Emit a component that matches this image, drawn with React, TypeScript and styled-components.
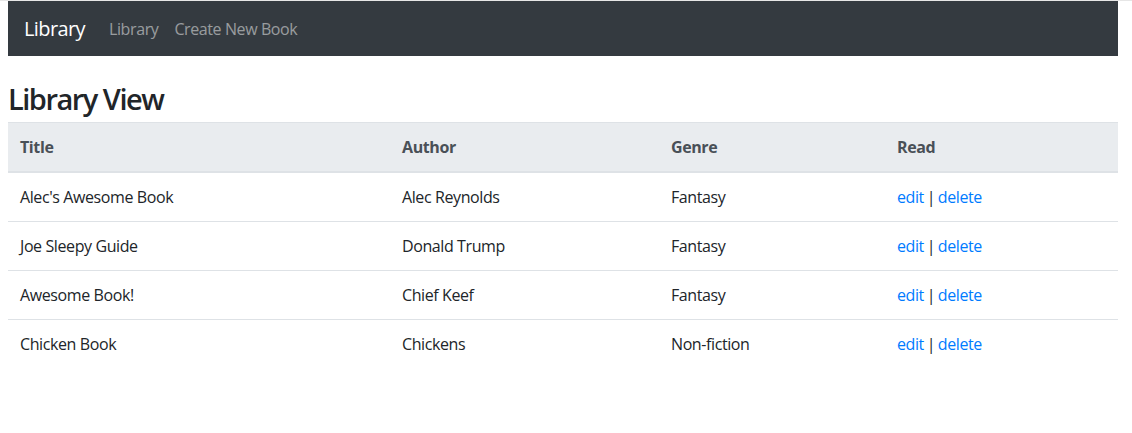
import React from "react";
import styled, { createGlobalStyle } from "styled-components";

const Global = createGlobalStyle`
  html, body { margin: 0; padding: 0; background: #fff; }
  body {
    font-family: "Open Sans", "Noto Sans", sans-serif;
    font-size: 16px;
    line-height: 1.5;
    letter-spacing: -0.4px;
    color: #212529;
    border-top: 1px solid #e6e6e6;
  }
`;

const Page = styled.div`
  width: 1110px;
  margin: 0 8px;
`;

const Navbar = styled.nav`
  display: flex;
  align-items: center;
  height: 55px;
  padding: 0 16px;
  background: #343a40;
`;

const Brand = styled.a`
  font-size: 20px;
  letter-spacing: -0.6px;
  color: #fff;
  text-decoration: none;
  margin-right: 16px;
  line-height: 30px;
`;

const NavLink = styled.a`
  color: rgba(255, 255, 255, 0.5);
  text-decoration: none;
  padding: 8px;
  font-size: 16px;
`;

const Heading = styled.h2`
  margin: 0;
  padding-top: 26px;
  font-size: 29px;
  font-weight: 600;
  letter-spacing: -1.5px;
  line-height: 1.2;
  height: 40px;
  box-sizing: content-box;
`;

const Table = styled.table`
  width: 100%;
  border-collapse: collapse;
  table-layout: fixed;
`;

const Th = styled.th<{ $w: number }>`
  box-sizing: border-box;
  width: ${(p) => p.$w}px;
  text-align: left;
  padding: 12px;
  font-weight: 700;
  color: #495057;
  background: #e9ecef;
  border-top: 1px solid #dee2e6;
  border-bottom: 2px solid #dee2e6;
  line-height: 24px;
`;

const Td = styled.td`
  padding: 12px;
  line-height: 24px;
  border-top: 1px solid #dee2e6;
  vertical-align: top;
`;

const Row = styled.tr`
  &:first-child td { border-top: none; }
`;

const Link = styled.a`
  color: #007bff;
  text-decoration: none;
`;

const Sep = styled.span`
  margin: 0 -1px;
`;

const books = [
  { title: "Alec's Awesome Book", author: "Alec Reynolds", genre: "Fantasy" },
  { title: "Joe Sleepy Guide", author: "Donald Trump", genre: "Fantasy" },
  { title: "Awesome Book!", author: "Chief Keef", genre: "Fantasy" },
  { title: "Chicken Book", author: "Chickens", genre: "Non-fiction" },
];

export default function App() {
  return (
    <>
      <Global />
      <Page>
        <Navbar>
          <Brand href="#">Library</Brand>
          <NavLink href="#">Library</NavLink>
          <NavLink href="#">Create New Book</NavLink>
        </Navbar>
        <Heading>Library View</Heading>
        <Table>
          <thead>
            <tr>
              <Th $w={382}>Title</Th>
              <Th $w={269}>Author</Th>
              <Th $w={226}>Genre</Th>
              <Th $w={233}>Read</Th>
            </tr>
          </thead>
          <tbody>
            {books.map((b) => (
              <Row key={b.title}>
                <Td>{b.title}</Td>
                <Td>{b.author}</Td>
                <Td>{b.genre}</Td>
                <Td>
                  <Link href="#">edit</Link> <Sep>|</Sep> <Link href="#">delete</Link>
                </Td>
              </Row>
            ))}
          </tbody>
        </Table>
      </Page>
    </>
  );
}
